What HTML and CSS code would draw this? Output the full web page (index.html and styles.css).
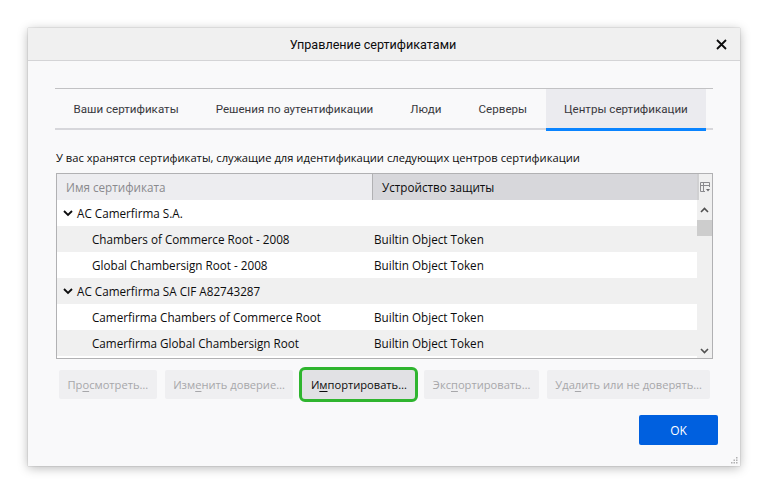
FILE: index.html
```html
<!DOCTYPE html>
<html lang="ru">
<head>
<meta charset="utf-8">
<title>Управление сертификатами</title>
<link rel="stylesheet" href="styles.css">
</head>
<body>
<div class="dialog">
  <div class="titlebar">
    <span class="title">Управление сертификатами</span>
    <span class="close">
      <svg width="11" height="11" viewBox="0 0 11 11"><path d="M1 1L10 10M10 1L1 10" stroke="#0c0c0d" stroke-width="1.8" fill="none"/></svg>
    </span>
  </div>
  <div class="content">
    <div class="tabs">
      <div class="tab">Ваши сертификаты</div>
      <div class="tab">Решения по аутентификации</div>
      <div class="tab">Люди</div>
      <div class="tab">Серверы</div>
      <div class="tab active">Центры сертификации</div>
    </div>
    <p class="desc">У вас хранятся сертификаты, служащие для идентификации следующих центров сертификации</p>
    <div class="tree">
      <div class="tree-main">
        <div class="thead">
          <div class="th th-name">Имя сертификата</div>
          <div class="th th-dev">Устройство защиты</div>
        </div>
        <div class="row parent">
          <div class="c1"><svg class="twisty" width="10" height="8" viewBox="0 0 10 8"><path d="M1 2L5 6L9 2" stroke="#0c0c0d" stroke-width="1.8" fill="none"/></svg>AC Camerfirma S.A.</div>
          <div class="c2"></div>
        </div>
        <div class="row alt">
          <div class="c1 child">Chambers of Commerce Root - 2008</div>
          <div class="c2">Builtin Object Token</div>
        </div>
        <div class="row">
          <div class="c1 child">Global Chambersign Root - 2008</div>
          <div class="c2">Builtin Object Token</div>
        </div>
        <div class="row alt parent">
          <div class="c1"><svg class="twisty" width="10" height="8" viewBox="0 0 10 8"><path d="M1 2L5 6L9 2" stroke="#0c0c0d" stroke-width="1.8" fill="none"/></svg>AC Camerfirma SA CIF A82743287</div>
          <div class="c2"></div>
        </div>
        <div class="row">
          <div class="c1 child">Camerfirma Chambers of Commerce Root</div>
          <div class="c2">Builtin Object Token</div>
        </div>
        <div class="row alt">
          <div class="c1 child">Camerfirma Global Chambersign Root</div>
          <div class="c2">Builtin Object Token</div>
        </div>
      </div>
      <div class="scrollcol">
        <div class="picker">
          <svg width="11" height="11" viewBox="0 0 11 11"><path d="M0.5 0.5H9.5V5M0.5 0.5V9.5H5M0.5 3.5H9.5M3.5 0.5V9.5" stroke="#8a8a8e" stroke-width="1" fill="none"/><path d="M6 7H10L8 9.5Z" fill="#6a6a6e"/></svg>
        </div>
        <div class="scrollbar">
          <svg class="arrow" width="9" height="6" viewBox="0 0 9 6"><path d="M1 5L4.5 1.5L8 5" stroke="#505050" stroke-width="1.6" fill="none"/></svg>
          <div class="thumb"></div>
          <div class="track"></div>
          <svg class="arrow" width="9" height="6" viewBox="0 0 9 6"><path d="M1 1L4.5 4.5L8 1" stroke="#505050" stroke-width="1.6" fill="none"/></svg>
        </div>
      </div>
    </div>
    <div class="buttons">
      <button class="btn" disabled>Пр<u>о</u>смотреть…</button>
      <button class="btn" disabled>Изм<u>е</u>нить доверие…</button>
      <button class="btn focused">И<u>м</u>портировать…</button>
      <button class="btn" disabled>Экс<u>п</u>ортировать…</button>
      <button class="btn" disabled>Уда<u>л</u>ить или не доверять…</button>
    </div>
    <div class="footer">
      <button class="ok">OK</button>
    </div>
  </div>
  <svg class="grip" width="7" height="7" viewBox="0 0 7 7"><g fill="#b0b0b0"><rect x="5" y="0" width="1.5" height="1.5"/><rect x="2.5" y="2.5" width="1.5" height="1.5"/><rect x="5" y="2.5" width="1.5" height="1.5"/><rect x="0" y="5" width="1.5" height="1.5"/><rect x="2.5" y="5" width="1.5" height="1.5"/><rect x="5" y="5" width="1.5" height="1.5"/></g></svg>
</div>
</body>
</html>
```
FILE: styles.css
```css
* { box-sizing: border-box; }
html, body { margin: 0; padding: 0; background: #ffffff; }
body {
  font-family: "Open Sans", "Noto Sans", sans-serif;
  font-size: 11.7px;
  color: #0c0c0d;
  width: 768px;
  height: 495px;
  overflow: hidden;
}
.dialog {
  position: relative;
  margin: 28px 0 0 28px;
  width: 712px;
  height: 438px;
  background: #f9f9fa;
  box-shadow: 0 2px 10px rgba(0,0,0,0.28), 0 0 1px rgba(0,0,0,0.35);
  display: flex;
  flex-direction: column;
}
.titlebar {
  height: 33px;
  background: #f0f0f0;
  border-bottom: 1px solid #d4d4d6;
  display: flex;
  align-items: center;
  justify-content: center;
  padding-right: 22px;
  position: relative;
  flex: none;
}
.title { font-family: "Roboto", "Open Sans", sans-serif; font-size: 12.6px; color: #0c0c0d; }
.close {
  position: absolute;
  right: 13px;
  top: 11px;
  width: 11px;
  height: 11px;
  display: flex;
}
.content {
  padding: 27px 27px 0 27px;
  display: flex;
  flex-direction: column;
  flex: 1;
}
.tabs {
  display: flex;
  height: 42px;
  border-top: 1px solid #c2c2c4;
  border-bottom: 2px solid #d7d7db;
}
.tab {
  padding: 0 18.5px;
  display: flex;
  align-items: center;
  color: #38383d;
  font-family: "Roboto", "Open Sans", sans-serif;
  font-size: 11.6px;
  height: 39px;
  white-space: nowrap;
}
.tab.active {
  background: #ebebef;
  border-bottom: 3px solid #0a84ff;
  height: 42px;
  margin-bottom: -2px;
}
.desc {
  margin: 19px 0 0 1px;
  line-height: 17px;
  font-size: 11.2px;
  color: #0c0c0d;
}
.tree {
  margin-top: 7px;
  margin-left: 1px;
  height: 186px;
  border: 1px solid #b1b1b3;
  display: flex;
  background: #ffffff;
}
.tree-main { flex: 1; display: flex; flex-direction: column; }
.thead { display: flex; height: 26px; }
.th {
  display: flex;
  align-items: center;
}
.th-name {
  width: 316px;
  padding-left: 9px;
  background: #ededf0;
  color: #8a8a8e;
  border-right: 1px solid #b1b1b3;
}
.th-dev {
  flex: 1;
  padding-left: 9px;
  background: #d7d7db;
  color: #0c0c0d;
}
.row {
  display: flex;
  height: 26px;
  align-items: center;
  background: #ffffff;
}
.row.alt { background: #f0f0f0; }
.c1 {
  width: 317px;
  display: flex;
  align-items: center;
  padding-left: 6px;
  white-space: nowrap;
}
.c1.child { padding-left: 35px; }
.twisty { margin-right: 4px; }
.c2 { flex: 1; white-space: nowrap; }
.scrollcol {
  width: 15px;
  display: flex;
  flex-direction: column;
  background: #f0f0f0;
}
.picker {
  height: 26px;
  background: #f0f0f0;
  display: flex;
  align-items: center;
  justify-content: center;
  border-left: 2px solid #d0d0d2;
}
.scrollbar {
  flex: 1;
  display: flex;
  flex-direction: column;
  align-items: center;
  background: #f0f0f0;
  padding: 7px 0 4px;
}
.thumb {
  width: 15px;
  height: 16px;
  background: #cdcdcd;
  margin-top: 7px;
}
.track { flex: 1; }
.buttons {
  display: flex;
  margin-top: 11px;
  margin-left: 4px;
  align-items: center;
}
.btn {
  font-family: "Open Sans", "Noto Sans", sans-serif;
  font-size: 11.15px;
  height: 29px;
  border: none;
  border-radius: 2px;
  background: #efeff1;
  color: #a7a7aa;
  padding: 0 8.5px;
  margin-right: 8px;
  white-space: nowrap;
}
.btn u { text-underline-offset: 2px; }
.btn.focused {
  background: #e1e1e4;
  color: #0c0c0d;
  outline: 3px solid #2fb52f;
  outline-offset: 0;
  border-radius: 3px;
  margin-left: 1px;
  margin-right: 9px;
}
.footer {
  display: flex;
  justify-content: flex-end;
  margin-top: 16px;
  margin-right: -5px;
}
.ok {
  font-family: "Open Sans", "Noto Sans", sans-serif;
  font-size: 12px;
  width: 79px;
  height: 30px;
  border: none;
  border-radius: 2px;
  background: #0060df;
  color: #ffffff;
}
.grip {
  position: absolute;
  right: 2px;
  bottom: 2px;
}
```
